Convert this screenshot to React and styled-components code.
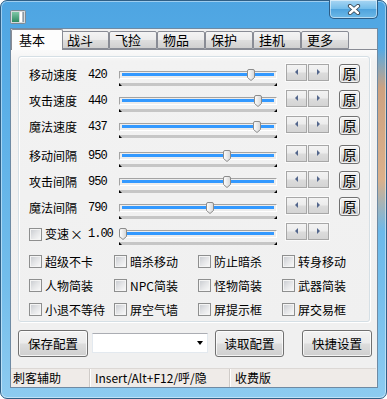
import React from "react";
import styled, { createGlobalStyle } from "styled-components";

const GlobalStyle = createGlobalStyle`
  html, body { margin: 0; padding: 0; background: #fff; overflow: hidden; }
  body {
    font-family: "Noto Sans CJK SC", "Noto Sans", sans-serif;
    font-size: 12px;
    color: #000;
  }
`;

const tabs = ["基本", "战斗", "飞捡", "物品", "保护", "挂机", "更多"];

const sliders = [
  { label: "移动速度", value: "420", thumb: 128, reset: true },
  { label: "攻击速度", value: "440", thumb: 135, reset: true },
  { label: "魔法速度", value: "437", thumb: 134, reset: true },
  { label: "移动间隔", value: "950", thumb: 104, reset: true, gap: true },
  { label: "攻击间隔", value: "950", thumb: 104, reset: true },
  { label: "魔法间隔", value: "790", thumb: 87, reset: true },
];

const checks = [
  "超级不卡", "暗杀移动", "防止暗杀", "转身移动",
  "人物简装", "NPC简装", "怪物简装", "武器简装",
  "小退不等待", "屏空气墙", "屏提示框", "屏交易框",
];

const Window = styled.div`
  box-sizing: border-box;
  width: 387px;
  height: 399px;
  padding: 0 8px 10px 9px;
  border: 1px solid #2f5f86;
  border-radius: 7px;
  background:
    linear-gradient(180deg, transparent 12%, rgba(226, 160, 110, 0.85) 22%, rgba(232, 176, 128, 0.9) 45%, transparent 58%) right / 9px 100% no-repeat,
    linear-gradient(180deg, #4ea5e2 0%, #5cb0e8 30%, #72bdeb 70%, #8dcbf0 100%);
  box-shadow: inset 0 0 0 1px rgba(255, 255, 255, 0.45);
  display: flex;
  flex-direction: column;
`;

const TitleBar = styled.div`
  height: 28px;
  display: flex;
  justify-content: space-between;
  align-items: flex-start;
`;

const AppIcon = styled.svg`
  margin-top: 9px;
`;

const CloseButton = styled.div`
  box-sizing: border-box;
  width: 49px;
  height: 19px;
  margin-top: -1px;
  border: 1px solid #2d5c85;
  border-top: none;
  border-radius: 0 0 5px 5px;
  background: linear-gradient(180deg, #a9d6f3 0%, #74bdea 48%, #4fa3dd 52%, #6db9e8 100%);
  box-shadow: inset 0 0 0 1px rgba(255, 255, 255, 0.5);
  display: flex;
  align-items: center;
  justify-content: center;
`;

const Client = styled.div`
  box-sizing: border-box;
  flex: 1;
  border: 1px solid #6f8aa3;
  background: #f0f0f0;
  display: flex;
  flex-direction: column;
`;

const TabStrip = styled.div`
  height: 20px;
  display: flex;
  align-items: flex-end;
  padding-left: 2px;
  position: relative;
  z-index: 1;
`;

const Tab = styled.div`
  box-sizing: border-box;
  width: ${(p) => (p.$active ? "52px" : "48px")};
  height: ${(p) => (p.$active ? "21px" : "18px")};
  margin: ${(p) => (p.$active ? "0 -2px -1px -2px" : "0")};
  padding-left: ${(p) => (p.$active ? "7px" : "5px")};
  border: 1px solid #898c95;
  border-bottom: ${(p) => (p.$active ? "none" : "1px solid #898c95")};
  border-radius: 2px 2px 0 0;
  background: ${(p) =>
    p.$active
      ? "#fdfdfd"
      : "linear-gradient(180deg, #f4f4f4 0%, #ebebeb 48%, #dedede 52%, #d0d0d0 100%)"};
  font-size: 13px;
  line-height: ${(p) => (p.$active ? "19px" : "16px")};
  position: relative;
  z-index: ${(p) => (p.$active ? 2 : 1)};
`;

const Panel = styled.div`
  border-top: 1px solid #898c95;
  padding: 6px 7px 3px 7px;
  background: linear-gradient(180deg, #fafafa 0, #f2f2f2 12px, #f0f0f0 100%);
`;

const GroupBox = styled.div`
  box-sizing: border-box;
  height: 266px;
  border: 1px solid #d5dfe5;
  border-radius: 3px;
  box-shadow: inset 1px 1px 0 #fff, 1px 1px 0 #fff;
  padding: 6px 0 0 10px;
`;

const Row = styled.div`
  display: flex;
  align-items: flex-start;
  height: 26px;
  margin-top: ${(p) => (p.$gap ? "3px" : "0")};
`;

const Label = styled.div`
  width: 59px;
  padding-top: 4px;
  line-height: 16px;
  font-size: 12px;
  white-space: nowrap;
  display: flex;
  align-items: center;
`;

const Value = styled.div`
  width: 31px;
  padding-top: 4px;
  line-height: 16px;
  font-family: "Liberation Mono", "DejaVu Sans Mono", monospace;
  font-size: 12px;
  letter-spacing: -1px;
`;

const Slider = styled.div`
  width: 158px;
  padding-top: 8px;
`;

const Track = styled.div`
  box-sizing: border-box;
  position: relative;
  height: 8px;
  border: 1px solid #a3a3a3;
  border-right-color: #fff;
  border-bottom-color: #fff;
  background: #ededed;
  padding: 1px 2px 0 2px;
`;

const Fill = styled.div`
  height: 3px;
  background: #3399ff;
`;

const Thumb = styled.svg`
  position: absolute;
  top: -3px;
`;

const Ticks = styled.div`
  margin-top: 4px;
  height: 3px;
  background: #c6c6c6;
  display: flex;
  justify-content: space-between;
  &::before {
    content: "";
    border-bottom: 3px solid #000;
    border-right: 3px solid transparent;
  }
  &::after {
    content: "";
    border-bottom: 3px solid #000;
    border-left: 3px solid transparent;
  }
`;

const Spin = styled.div`
  box-sizing: border-box;
  margin-left: 8px;
  width: 45px;
  height: 19px;
  display: flex;
  border: 1px solid #fafafa;
  gap: 1px;
`;

const SpinHalf = styled.div`
  box-sizing: border-box;
  flex: 1;
  border: 1px solid #a7a7a7;
  background: linear-gradient(180deg, #f3f3f3 0%, #ececec 48%, #dcdcdc 52%, #d4d4d4 100%);
  display: flex;
  align-items: center;
  justify-content: center;
`;

const Arrow = styled.span`
  width: 0;
  height: 0;
  margin-top: -1px;
  border-top: 3px solid transparent;
  border-bottom: 3px solid transparent;
  ${(p) => (p.$dir === "left" ? "border-right: 3px solid #53668c;" : "border-left: 3px solid #53668c;")}
`;

const ResetButton = styled.div`
  box-sizing: border-box;
  margin: 1px 0 0 9px;
  width: 21px;
  height: 19px;
  border: 1px solid #707070;
  border-radius: 3px;
  background: linear-gradient(180deg, #f2f2f2 0%, #ebebeb 48%, #dddddd 52%, #cfcfcf 100%);
  box-shadow: inset 0 0 0 1px rgba(255, 255, 255, 0.7);
  font-size: 14px;
  line-height: 16px;
  text-align: center;
`;

const CheckGrid = styled.div`
  margin-top: 1px;
  display: grid;
  grid-template-columns: 85px 84px 84px 84px;
  grid-auto-rows: 24px;
`;

const CheckItem = styled.div`
  display: flex;
  align-items: center;
  gap: 3px;
  font-size: 12px;
  white-space: nowrap;
`;

const Box = styled.span`
  box-sizing: border-box;
  width: 13px;
  height: 13px;
  flex: none;
  border: 1px solid #8e8f8f;
  box-shadow: inset 0 0 0 1px #f4f4f4;
  background: linear-gradient(135deg, #c6c9ce 0%, #e4e5e7 50%, #fbfbfb 100%);
  margin-right: ${(p) => p.$mr || 0}px;
`;

const Times = styled.span`
  font-size: 13px;
  margin-left: 1px;
`;

const ButtonRow = styled.div`
  margin-top: 5px;
  padding-left: 7px;
  height: 27px;
  display: flex;
  align-items: flex-start;
`;

const Button = styled.div`
  box-sizing: border-box;
  width: ${(p) => p.$w}px;
  height: 27px;
  margin-left: ${(p) => p.$ml || 0}px;
  border: 1px solid #707070;
  border-radius: 3px;
  background: linear-gradient(180deg, #f2f2f2 0%, #ebebeb 48%, #dddddd 52%, #cfcfcf 100%);
  box-shadow: inset 0 0 0 1px rgba(255, 255, 255, 0.75);
  font-size: 12.5px;
  line-height: 25px;
  text-align: center;
`;

const Combo = styled.div`
  box-sizing: border-box;
  width: 116px;
  height: 20px;
  margin: 3px 0 0 4px;
  border: 1px solid #e3e9ef;
  border-top-color: #abadb3;
  background: #fff;
  display: flex;
  align-items: center;
  justify-content: flex-end;
  padding-right: 4px;
  &::after {
    content: "";
    border-top: 4px solid #000;
    border-left: 3.5px solid transparent;
    border-right: 3.5px solid transparent;
  }
`;

const StatusBar = styled.div`
  margin-top: 11px;
  height: 19px;
  margin-right: 1px;
  display: flex;
  background: #efebe8;
  border-top: 1px solid #dcd8d5;
  box-sizing: border-box;
  font-size: 12px;
  line-height: 17px;
`;

const StatusCell = styled.div`
  box-sizing: border-box;
  width: ${(p) => (p.$w ? `${p.$w}px` : "auto")};
  flex: ${(p) => (p.$w ? "none" : 1)};
  padding-left: ${(p) => p.$pl}px;
  border-right: ${(p) => (p.$w ? "1px solid #cfcbc8" : "none")};
  box-shadow: ${(p) => (p.$w ? "1px 0 0 #fff" : "none")};
  white-space: nowrap;
`;

const TitleIcon = () => (
  <AppIcon width="16" height="14" viewBox="0 0 16 14">
    <defs>
      <linearGradient id="ig" x1="0" y1="0" x2="0" y2="1">
        <stop offset="0" stopColor="#7fc6a6" />
        <stop offset="1" stopColor="#2e8a63" />
      </linearGradient>
    </defs>
    <rect x="0.5" y="0.5" width="15" height="13" rx="1" fill="#d4dade" stroke="#7d8a94" />
    <rect x="2" y="2" width="7" height="10" fill="url(#ig)" />
    <rect x="10" y="2" width="2" height="10" fill="#fff" />
    <rect x="12.5" y="2" width="1.5" height="10" fill="#8d9aa4" />
  </AppIcon>
);

const CloseGlyph = () => (
  <svg width="14" height="11" viewBox="0 0 14 11">
    <path d="M3 2 L11 9 M11 2 L3 9" stroke="#3a4652" strokeWidth="4.2" strokeLinecap="round" />
    <path d="M3 2 L11 9 M11 2 L3 9" stroke="#fff" strokeWidth="2.4" strokeLinecap="round" />
  </svg>
);

const ThumbShape = ({ left }) => (
  <Thumb width="8" height="12" viewBox="0 0 8 12" style={{ left }}>
    <defs>
      <linearGradient id="tg" x1="0" y1="0" x2="1" y2="0">
        <stop offset="0" stopColor="#ffffff" />
        <stop offset="1" stopColor="#d6d6d6" />
      </linearGradient>
    </defs>
    <path d="M0.5 2 Q0.5 0.5 2 0.5 H6 Q7.5 0.5 7.5 2 V8.5 L4 11.5 L0.5 8.5 Z" fill="url(#tg)" stroke="#8b8b8b" />
  </Thumb>
);

const SliderControl = ({ thumb }) => (
  <Slider>
    <Track>
      <Fill />
      <ThumbShape left={thumb - 1} />
    </Track>
    <Ticks />
  </Slider>
);

const SpinBox = () => (
  <Spin>
    <SpinHalf>
      <Arrow $dir="left" />
    </SpinHalf>
    <SpinHalf>
      <Arrow $dir="right" />
    </SpinHalf>
  </Spin>
);

export default function App() {
  return (
    <>
      <GlobalStyle />
      <Window>
        <TitleBar>
          <TitleIcon />
          <CloseButton>
            <CloseGlyph />
          </CloseButton>
        </TitleBar>
        <Client>
          <TabStrip>
            {tabs.map((t, i) => (
              <Tab key={t} $active={i === 0}>
                {t}
              </Tab>
            ))}
          </TabStrip>
          <Panel>
            <GroupBox>
              {sliders.map((s) => (
                <Row key={s.label} $gap={s.gap}>
                  <Label>{s.label}</Label>
                  <Value>{s.value}</Value>
                  <SliderControl thumb={s.thumb} />
                  <SpinBox />
                  {s.reset && <ResetButton>原</ResetButton>}
                </Row>
              ))}
              <Row>
                <Label>
                  <Box $mr={3} />
                  变速<Times>×</Times>
                </Label>
                <Value>1.00</Value>
                <SliderControl thumb={0} />
                <SpinBox />
              </Row>
              <CheckGrid>
                {checks.map((c) => (
                  <CheckItem key={c}>
                    <Box />
                    {c}
                  </CheckItem>
                ))}
              </CheckGrid>
            </GroupBox>
          </Panel>
          <ButtonRow>
            <Button $w={70}>保存配置</Button>
            <Combo />
            <Button $w={69} $ml={7}>读取配置</Button>
            <Button $w={70} $ml={18}>快捷设置</Button>
          </ButtonRow>
          <StatusBar>
            <StatusCell $w={79} $pl={2}>刺客辅助</StatusCell>
            <StatusCell $w={140} $pl={5}>Insert/Alt+F12/呼/隐</StatusCell>
            <StatusCell $pl={5}>收费版</StatusCell>
          </StatusBar>
        </Client>
      </Window>
    </>
  );
}
